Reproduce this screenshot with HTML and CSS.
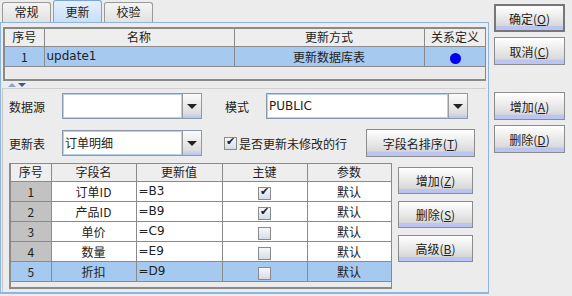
FILE: index.html
```html
<!DOCTYPE html>
<html lang="zh-CN">
<head>
  <meta charset="UTF-8" />
  <title>更新</title>
  <link rel="stylesheet" href="styles.css">
</head>
<body>
  <div class="dialog">
    <div class="tabs-area">
      <div class="tab-strip">
        <div class="tab">常规</div>
        <div class="tab active">更新</div>
        <div class="tab">校验</div>
      </div>
      <div class="tab-panel">
        <div class="top-table">
          <table class="grid">
            <tr class="head">
              <th class="c-no">序号</th>
              <th class="c-name">名称</th>
              <th class="c-mode">更新方式</th>
              <th class="c-rel">关系定义</th>
            </tr>
            <tr class="selected">
              <td class="center">1</td>
              <td class="latin">update1</td>
              <td class="center">更新数据库表</td>
              <td class="center"><span class="dot"></span></td>
            </tr>
          </table>
        </div>
        <div class="divider">
          <span class="arrow-up"></span><span class="arrow-down"></span>
        </div>
        <div class="lower">
          <div class="form-row">
            <label class="lbl lbl-first">数据源</label>
            <div class="combo combo-short">
              <div class="combo-text"></div>
              <div class="combo-btn"><span class="tri"></span></div>
            </div>
            <label class="lbl lbl-mode">模式</label>
            <div class="combo combo-long">
              <div class="combo-text latin">PUBLIC</div>
              <div class="combo-btn"><span class="tri"></span></div>
            </div>
          </div>
          <div class="form-row row-two">
            <label class="lbl lbl-first">更新表</label>
            <div class="combo combo-short">
              <div class="combo-text">订单明细</div>
              <div class="combo-btn"><span class="tri"></span></div>
            </div>
            <label class="check-label"><span class="check on"></span>是否更新未修改的行</label>
            <button class="btn btn-sort">字段名排序(<u>T</u>)</button>
          </div>
          <div class="field-area">
            <div class="field-table">
              <table class="grid">
                <tr class="head">
                  <th class="f-no">序号</th>
                  <th class="f-name">字段名</th>
                  <th class="f-val">更新值</th>
                  <th class="f-key">主键</th>
                  <th class="f-arg">参数</th>
                </tr>
                <tr>
                  <td class="rowhead">1</td><td class="center">订单ID</td><td class="latin">=B3</td>
                  <td class="center"><span class="check on"></span></td><td class="center">默认</td>
                </tr>
                <tr>
                  <td class="rowhead">2</td><td class="center">产品ID</td><td class="latin">=B9</td>
                  <td class="center"><span class="check on"></span></td><td class="center">默认</td>
                </tr>
                <tr>
                  <td class="rowhead">3</td><td class="center">单价</td><td class="latin">=C9</td>
                  <td class="center"><span class="check"></span></td><td class="center">默认</td>
                </tr>
                <tr>
                  <td class="rowhead">4</td><td class="center">数量</td><td class="latin">=E9</td>
                  <td class="center"><span class="check"></span></td><td class="center">默认</td>
                </tr>
                <tr class="selected">
                  <td class="rowhead">5</td><td class="center">折扣</td><td class="latin">=D9</td>
                  <td class="center"><span class="check"></span></td><td class="center">默认</td>
                </tr>
              </table>
            </div>
            <div class="field-buttons">
              <button class="btn">增加(<u>Z</u>)</button>
              <button class="btn">删除(<u>S</u>)</button>
              <button class="btn">高级(<u>B</u>)</button>
            </div>
          </div>
        </div>
      </div>
    </div>
    <div class="side">
      <button class="btn btn-side default">确定(<u>O</u>)</button>
      <button class="btn btn-side">取消(<u>C</u>)</button>
      <button class="btn btn-side gap-top">增加(<u>A</u>)</button>
      <button class="btn btn-side">删除(<u>D</u>)</button>
    </div>
  </div>
</body>
</html>
```

FILE: styles.css
```css
* { box-sizing: border-box; }
body {
  margin: 0;
  width: 572px;
  height: 296px;
  overflow: hidden;
  background-color: #ececec;
  font-family: "Noto Sans CJK SC", "DejaVu Sans", sans-serif;
  font-size: 12px;
  color: #222;
}
.latin { font-family: "DejaVu Sans", "Noto Sans CJK SC", sans-serif; font-size: 12px; }
u { text-decoration: underline; text-underline-offset: 1px; }

.dialog { display: flex; height: 296px; }
.tabs-area { width: 489px; display: flex; flex-direction: column; }

/* tabs */
.tab-strip { display: flex; height: 22px; padding-left: 2px; gap: 2px; align-items: flex-end; }
.tab {
  width: 49px;
  height: 20px;
  line-height: 18px;
  text-align: center;
  border: 1px solid #9a9a9a;
  border-bottom: none;
  border-radius: 3px 3px 0 0;
  background: linear-gradient(#f4f4f4, #e2e2e2);
}
.tab.active {
  height: 22px;
  line-height: 21px;
  border-color: #7aa3d6;
  background: linear-gradient(#e4f0fc, #c9def5);
}
.tab-panel {
  flex: 1;
  border: 1px solid #8fb4e0;
  border-bottom-width: 2px;
  margin-bottom: 2px;
  padding: 4px 2px 0 2px;
  display: flex;
  flex-direction: column;
}

/* tables */
.grid { border-collapse: collapse; table-layout: fixed; }
.grid th {
  font-weight: normal;
  background: #eeeeee;
  border: 1px solid #8a8a8a;
  border-top: none;
  height: 17px;
  padding: 0;
  line-height: 16px;
}
.grid td {
  border: 1px solid #8a8a8a;
  height: 20px;
  padding: 0 2px;
  background: #fff;
  white-space: nowrap;
}
.grid .center { text-align: center; }
.grid tr.selected td { background: #a6c9ef; }
.grid tr td:first-child, .grid tr th:first-child { border-left: none; }

.top-table {
  height: 54px;
  border: 2px solid #8a8a8a;
  border-right-width: 1px;
  background: #ebebeb;
  overflow: hidden;
}
.top-table .grid { width: 481px; }
.c-no { width: 39px; }
.c-name { width: 190px; }
.c-mode { width: 190px; }
.c-rel { width: 62px; }
.dot {
  display: inline-block;
  width: 11px;
  height: 11px;
  border-radius: 50%;
  background: #0000ee;
  vertical-align: middle;
}

/* split divider */
.divider { height: 7px; display: flex; align-items: center; gap: 2px; padding-left: 5px; }
.arrow-up, .arrow-down { width: 0; height: 0; border-left: 4px solid transparent; border-right: 4px solid transparent; }
.arrow-up { border-bottom: 4px solid #8aa4c4; }
.arrow-down { border-top: 4px solid #3c5a88; }

/* lower panel */
.lower {
  flex: 1;
  border-top: 1px solid #d0d0d0;
  border-left: 1px solid #c8c8c8;
  margin-left: -1px;
  padding: 4px 0 0 5px;
}
.form-row { display: flex; align-items: center; height: 26px; }
.row-two { margin-top: 11px; }
.lbl { width: 54px; }
.lbl-first { padding-left: 1px; }
.lbl-mode { width: 41px; margin-left: 23px; }
.combo { display: flex; height: 26px; border: 1px solid #8a9aac; }
.combo-short { width: 140px; }
.combo-long { width: 202px; }
.combo-text {
  flex: 1;
  background: #fff;
  border: 1px solid #b8cfea;
  line-height: 22px;
  padding-left: 1px;
}
.combo-btn {
  width: 19px;
  border-left: 1px solid #9a9a9a;
  background: linear-gradient(#fbfbfb, #dedede 80%, #b9c3ef);
  display: flex;
  align-items: center;
  justify-content: center;
}
.tri { width: 0; height: 0; border-left: 5px solid transparent; border-right: 5px solid transparent; border-top: 5px solid #222; }

.check-label { display: flex; align-items: center; margin-left: 22px; gap: 2px; }
.check {
  display: inline-block;
  width: 13px;
  height: 13px;
  border: 1px solid #8a8a8a;
  background: linear-gradient(#f6f8fb, #d6dbe4);
  vertical-align: middle;
  position: relative;
}
.check.on::after {
  content: "✔";
  position: absolute;
  left: 1px;
  top: -3px;
  font-size: 11px;
  font-family: "DejaVu Sans", sans-serif;
  color: #222;
}

/* buttons */
.btn {
  font-family: "Noto Sans CJK SC", "DejaVu Sans", sans-serif;
  font-size: 12px;
  color: #222;
  border: 1px solid #8c8c8c;
  background: linear-gradient(#ffffff, #e6e6e6 55%, #d8d8d8 82%, #bcc4f2 84%, #bcc4f2);
  padding: 0;
  height: 27px;
}
.btn-sort { width: 109px; height: 28px; margin-left: 19px; }

.field-area { display: flex; margin-top: 7px; }
.field-table {
  width: 383px;
  height: 126px;
  border: 2px solid #8a8a8a;
  border-top-width: 1px;
  border-right-width: 1px;
  background: #ebebeb;
  margin-left: 1px;
}
.field-table .grid { width: 380px; }
.f-no { width: 40px; }
.f-name { width: 85px; }
.f-val { width: 86px; }
.f-key { width: 85px; }
.f-arg { width: 84px; }
.grid td.rowhead { background: #c2c2c2; text-align: center; }
.grid tr.selected td.rowhead { background: #a6c9ef; }

.field-buttons { display: flex; flex-direction: column; gap: 7px; margin-left: 6px; padding-top: 4px; }
.field-buttons .btn { width: 75px; }

.side { display: flex; flex-direction: column; gap: 5px; padding: 4px 0 0 5px; }
.btn-side { width: 71px; height: 28px; }
.btn-side.default { border: 2px solid #777; }
.gap-top { margin-top: 22px; }
```
